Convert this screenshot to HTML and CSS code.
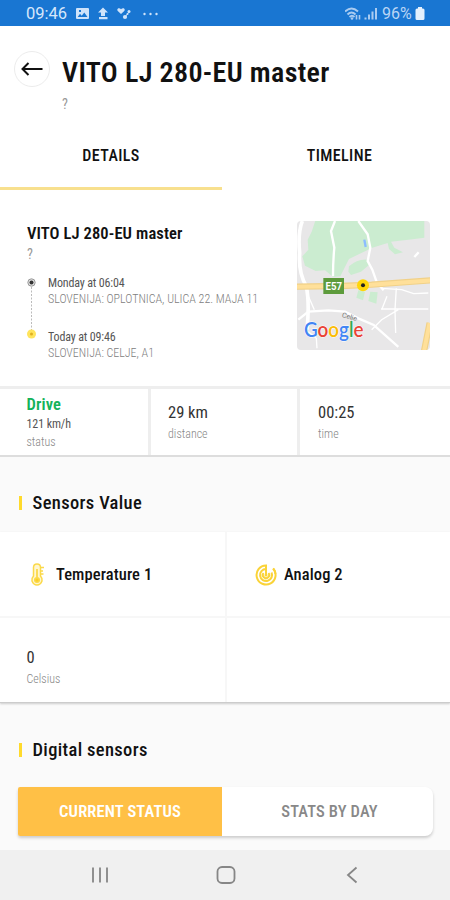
FILE: index.html
```html
<!DOCTYPE html>
<html lang="en">
<head>
<meta charset="utf-8">
<title>Vehicle details</title>
<link rel="stylesheet" href="styles.css">
</head>
<body>
<div class="statusbar">
  <span class="clock">09:46</span>
  <svg class="sb-left" width="90" height="16" viewBox="0 0 90 16" fill="#cfe3fa">
    <path fill-rule="evenodd" d="M2 2h11q1 0 1 1v9q0 1-1 1H2q-1 0-1-1V3q0-1 1-1zm.7 9h9.8L9.300 6.500l-2.600 3.200L5 7.800zM4 4h2v2H4z"/>
    <path d="M28 1.500l5 5h-3V10h-4V6.500h-3zM24 11h8.500v2.200H24z"/>
    <path d="M46 8L42.500 4.800q-.8-1.800.8-2.500 1.600-.4 2.700 1 1.200-1.400 2.800-1 1.500.8.7 2.500z"/>
    <circle cx="50" cy="11" r="2.100"/><circle cx="54" cy="5.500" r="1.500"/><circle cx="52.500" cy="8" r="1"/><path d="M50 11l4-5" stroke="#cfe3fa"/>
    <circle cx="69.500" cy="8" r="1.200"/><circle cx="75.500" cy="8" r="1.200"/><circle cx="81.500" cy="8" r="1.200"/>
  </svg>
  <svg class="sb-right" width="36" height="16" viewBox="0 0 36 16" fill="none" stroke="#a9cbf1">
    <path stroke-width="2" d="M0 5.500q6.500-6 13 0M2.500 8.500q4-4 8 0"/>
    <path stroke-width="1.800" d="M4.500 11q2.500-2.500 5 0"/>
    <circle cx="7" cy="12.500" r="1.300" fill="#a9cbf1" stroke="none"/>
    <path stroke-width="1.600" d="M11.500 9v4.500M14.500 9v4.500"/>
    <path stroke-width="2" d="M20.500 11.500v2M24 8.500v5M27.500 5.500v8M31 2v11.500"/>
  </svg>
  <span class="battery-text">96%</span>
  <svg width="10" height="14" viewBox="0 0 10 14" fill="#e4f0fd"><path d="M3 0h4v1.500h1q1.500 0 1.500 1.500v8.500q0 1.500-1.500 1.500H2Q.5 13 .5 11.500V3q0-1.500 1.500-1.500h1z"/></svg>
</div>

<header class="header">
  <div class="back"><svg width="22" height="14" viewBox="0 0 22 14" fill="none" stroke="#111" stroke-width="2"><path d="M21.500 7H1.500M7.500 1l-6 6 6 6"/></svg></div>
  <div class="heading">
    <h1 class="t">VITO LJ 280-EU master</h1>
    <p class="t">?</p>
  </div>
</header>

<nav class="tabs">
  <div class="tab active"><span class="t">DETAILS</span></div>
  <div class="tab"><span class="t">TIMELINE</span></div>
</nav>

<section class="trip">
  <div class="trip-info">
    <h2 class="t">VITO LJ 280-EU master</h2>
    <p class="t sub">?</p>
    <div class="route">
      <svg width="10" height="66" viewBox="0 0 10 66">
        <path d="M4.500 10v46" stroke="#bbb" stroke-dasharray="2 1.500"/>
        <circle cx="4.500" cy="5.500" r="3.700" fill="#ddd" stroke="#999"/><circle cx="4.500" cy="5.500" r="2" fill="#333"/>
        <circle cx="4.500" cy="57" r="4.500" fill="#ffe45c"/><circle cx="4.500" cy="57" r="1.500" fill="#e0b020"/>
      </svg>
      <div class="stops">
        <div class="stop"><b class="t">Monday at 06:04</b><span class="t addr">SLOVENIJA: OPLOTNICA, ULICA 22. MAJA 11</span></div>
        <div class="stop"><b class="t">Today at 09:46</b><span class="t addr">SLOVENIJA: CELJE, A1</span></div>
      </div>
    </div>
  </div>
  <svg class="map" width="133" height="129" viewBox="0 0 133 129">
    <rect width="133" height="129" fill="#e8e7e8"/>
    <g transform="scale(.3333) translate(-36 -34)">
      <g fill="#cbecd0">
        <path d="M92 30h326v54l-48 6-52 6 10 18 26 14-24 6-18-16-4-18-46 14-70 34-14 28-12 24-22 2-24-20-28 2-32-16-8-28 18-20-2-30 12-24z"/>
        <path d="M192 170q26-24 58-20l2 16-24 20-30 10-8-10zM220 242l20 4-6 26-20-8zM256 246l22 2-4 34-24-8z"/>
      </g>
      <path stroke="#8bbcff" stroke-width="7" d="M238 90l4 22"/>
      <g fill="none" stroke="#fff">
        <path stroke-width="11" d="M52 34Q38 70 44 130q-4 60 20 100 10 50 2 130"/>
        <path stroke-width="7" d="M150 34l-12 30 10 50q-4 40-4 86M220 34l28 40 8 40-8 40 14 26 14 40 20 22M40 330l30-24 60-4 50 4 40 20 46 20 74 66"/>
        <path stroke-width="4" d="M66 250l22 50M290 236l60 4 36 12 44-2M334 236l-4 64 2 70M288 298h142M340 300l-50 30-30 30M306 260l-16 40M70 366l24 20 2 30"/>
        <path stroke-width="7" d="M388 142l13-14"/>
      </g>
      <path fill="none" stroke="#f1d188" stroke-width="19" d="M30 231l140-2 90-4 180-13M434 340l-18 90"/>
      <path fill="none" stroke="#ffe09a" stroke-width="12" d="M30 231l140-2 90-4 180-13M434 340l-18 90"/>
      <rect x="115" y="205" width="62" height="48" fill="#5d9b3c"/>
      <circle cx="234" cy="227" r="18" fill="#ffd60a"/><circle cx="234" cy="227" r="6" fill="#222"/>
    </g>
    <text x="28.500" y="69" textLength="16.500" lengthAdjust="spacingAndGlyphs" class="road">E57</text>
    <text class="town" x="44.500" y="96" transform="rotate(16 44.5 96)">Celje</text>
    <text class="google" x="7" y="116" textLength="59.500" lengthAdjust="spacingAndGlyphs"><tspan fill="#4285f4">G</tspan><tspan fill="#ea4335">o</tspan><tspan fill="#fbbc05">o</tspan><tspan fill="#4285f4">g</tspan><tspan fill="#34a853">l</tspan><tspan fill="#ea4335">e</tspan></text>
  </svg>
</section>

<section class="stats">
  <div class="stat"><b class="t drive">Drive</b><span class="t speed">121 km/h</span><span class="t label">status</span></div>
  <div class="stat"><span class="t value">29 km</span><span class="t label">distance</span></div>
  <div class="stat"><span class="t value">00:25</span><span class="t label">time</span></div>
</section>

<h3 class="section-title"><span class="t">Sensors Value</span></h3>

<section class="sensors">
  <div class="cell name">
    <svg width="20" height="24" viewBox="0 0 20 24" fill="none" stroke="#fbd94a" stroke-width="1.500"><path fill="#fff6cf" d="M5.500 13V4.500q0-3.500 3.500-3.500t3.500 3.500V13q2 2 1.500 5-1.500 4-5 4t-5-4q-.5-3 1.500-5z"/><path d="M9 6v10" stroke-width="1.800"/><circle cx="9" cy="17" r="2.300" fill="#fbcf25"/><path d="M13 4.500h3M13 8h2M13 11h2.500"/></svg>
    <span class="t">Temperature 1</span>
  </div>
  <div class="cell name analog">
    <svg width="22" height="22" viewBox="0 0 22 22" fill="none" stroke="#fad338" stroke-width="2"><path d="M18 4.500A9.500 9.500 0 1 1 11 1.500V10"/><path d="M18.500 4.500a9.600 9.600 0 0 1 2 5.500M11 5a6 6 0 1 0 5.500 3.500M8.500 9a3.200 3.200 0 1 0 5 0"/><circle cx="11" cy="11" r="1.500" fill="#fad338" stroke="none"/></svg>
    <span class="t">Analog 2</span>
  </div>
  <div class="cell reading"><span class="t value">0</span><span class="t label">Celsius</span></div>
  <div class="cell"></div>
</section>

<h3 class="section-title digital"><span class="t">Digital sensors</span></h3>

<div class="segmented">
  <div class="segment on"><span class="t">CURRENT STATUS</span></div>
  <div class="segment"><span class="t">STATS BY DAY</span></div>
</div>

<footer class="navbar">
  <svg width="18" height="18" viewBox="0 0 18 18" stroke="#868686" stroke-width="1.800"><path d="M2 1.500v15M9 1.500v15M16 1.500v15"/></svg>
  <svg width="20" height="20" viewBox="0 0 20 20" fill="none" stroke="#868686" stroke-width="1.800"><rect x="1.500" y="2" width="17" height="16" rx="4.500"/></svg>
  <svg width="12" height="18" viewBox="0 0 12 18" fill="none" stroke="#868686" stroke-width="1.800"><path d="M10.500 1.500L2 9l8.500 7.500"/></svg>
</footer>
</body>
</html>
```
FILE: styles.css
```css
* { box-sizing: border-box; margin: 0; padding: 0; }
body { width: 450px; height: 900px; overflow: hidden; background: #fafafa; color: #111; font-family: "Roboto Condensed", Roboto, sans-serif; display: flex; flex-direction: column; }
body > * { flex-shrink: 0; }
svg { display: block; flex-shrink: 0; }
.t { display: block; white-space: nowrap; }

.statusbar { height: 26px; background: #1976d2; display: flex; align-items: center; padding: 2px 25px 0 26px; color: #d6e7fb; font: 16.500px/24px Roboto, sans-serif; }
.clock { width: 49px; }
.sb-right { margin-left: auto; margin-right: 1px; }
.battery-text { color: #b9d5f5; width: 33px; font-size: 16px; }

.header { height: 97px; background: #fff; display: flex; padding: 25px 0 0 14px; }
.back { width: 36px; height: 36px; border: 1px solid #ececec; border-radius: 50%; display: flex; align-items: center; justify-content: center; }
.heading { margin-left: 12px; }
.heading h1 { font-size: 28px; font-weight: 600; line-height: 42px; letter-spacing: .36px; padding-top: 1px; margin-bottom: -1px; }
.heading p { font-size: 14px; line-height: 22px; color: #999; }

.tabs { height: 67px; background: #fff; display: flex; }
.tab { width: 222px; height: 67px; text-align: center; font-size: 16px; font-weight: 500; line-height: 66px; letter-spacing: .4px; border-bottom: 3px solid transparent; }
.tab + .tab { width: 228px; padding-left: 7px; }
.tab.active { border-bottom-color: #f8e08e; }

.trip { height: 199px; background: #fff; border-bottom: 3px solid #eee; display: flex; justify-content: space-between; padding: 31px 20px 0 27px; }
.trip-info { width: 240px; }
.trip h2 { font-size: 16.500px; font-weight: 600; line-height: 24px; margin-top: 1px; letter-spacing: .1px; }
.sub { font-size: 14px; line-height: 16px; color: #999; }
.route { display: flex; gap: 11px; margin-top: 16px; }
.route > svg { margin-top: -1px; }
.stop { height: 56.500px; }
.stop b { font-size: 12px; font-weight: 400; line-height: 16px; margin-top: -3px; color: #555; letter-spacing: -.15px; }
.stop .addr { font-size: 12px; line-height: 16px; font-weight: 300; color: #808080; }
.map { border-radius: 4px; }
.road { font: 700 10.500px Roboto, sans-serif; fill: #fff; }
.town { font: 7px Roboto, sans-serif; fill: #777; }
.google { font: 600 21px Lato, sans-serif; stroke: #fff; stroke-width: 1px; paint-order: stroke; }

.stats { height: 68px; display: grid; grid-template-columns: 148px 149px 153px; background: #fff; border-bottom: 2px solid #ddd; }
.stat { border-left: 3px solid #eee; padding: 14px 0 0 17px; }
.stat + .stat + .stat { padding-left: 18px; }
.stat:first-child { border-left: 0; padding: 6px 0 0 26.500px; }
.value { font-size: 16.500px; line-height: 20px; color: #333; }
.label { font-size: 12px; line-height: 18px; margin-top: 2px; color: #888; font-weight: 300; }
.drive { font-size: 16.500px; line-height: 20px; font-weight: 600; color: #14b35a; letter-spacing: .15px; }
.speed { font-size: 12px; line-height: 16px; color: #555; margin-top: 1px; letter-spacing: -.1px; }
.stat:first-child .label { margin-top: 1px; }

.section-title { height: 75px; padding: 36px 0 0 19px; font-size: 18.500px; font-weight: 500; line-height: 20px; letter-spacing: .35px; display: flex; align-items: flex-start; }
.section-title::before { content: ""; width: 3px; height: 14px; margin: 3px 10.500px 0 0; background: #ffda2c; }

.sensors { height: 171px; display: grid; grid-template-columns: 225px 223px; grid-template-rows: 84px 84px; gap: 2px; background: #f7f7f7; border-bottom: 1px solid #ccc; box-shadow: 0 1px 2px #ccc; }
.cell { background: #fff; }
.name { display: flex; align-items: center; gap: 8px; padding: 1px 0 0 28px; font-size: 16.500px; font-weight: 500; letter-spacing: .1px; }
.analog { padding-left: 28px; gap: 7px; }
.reading { padding: 30px 0 0 26.500px; }

.segmented { width: 415px; height: 49px; margin: 0 0 0 18px; display: flex; background: #fff; border-radius: 3px 8px 8px 3px; box-shadow: 0 2px 3px #ccc; }
.digital { height: 84px; padding-top: 37px; }
.segment { width: 211px; padding-left: 4px; text-align: center; color: #888; font-size: 16.500px; font-weight: 500; line-height: 50px; letter-spacing: .15px; }
.segment.on { width: 204px; padding-left: 0; background: #ffc046; color: #fff; font-weight: 600; border-radius: 2px 0 0 2px; }

.navbar { margin-top: auto; height: 50px; background: #f0f0f0; display: grid; grid-template-columns: 125px 126px 1fr; align-items: center; padding: 0 92px 0 91px; }
.navbar svg:last-child { justify-self: start; margin-left: 4px; }
```
